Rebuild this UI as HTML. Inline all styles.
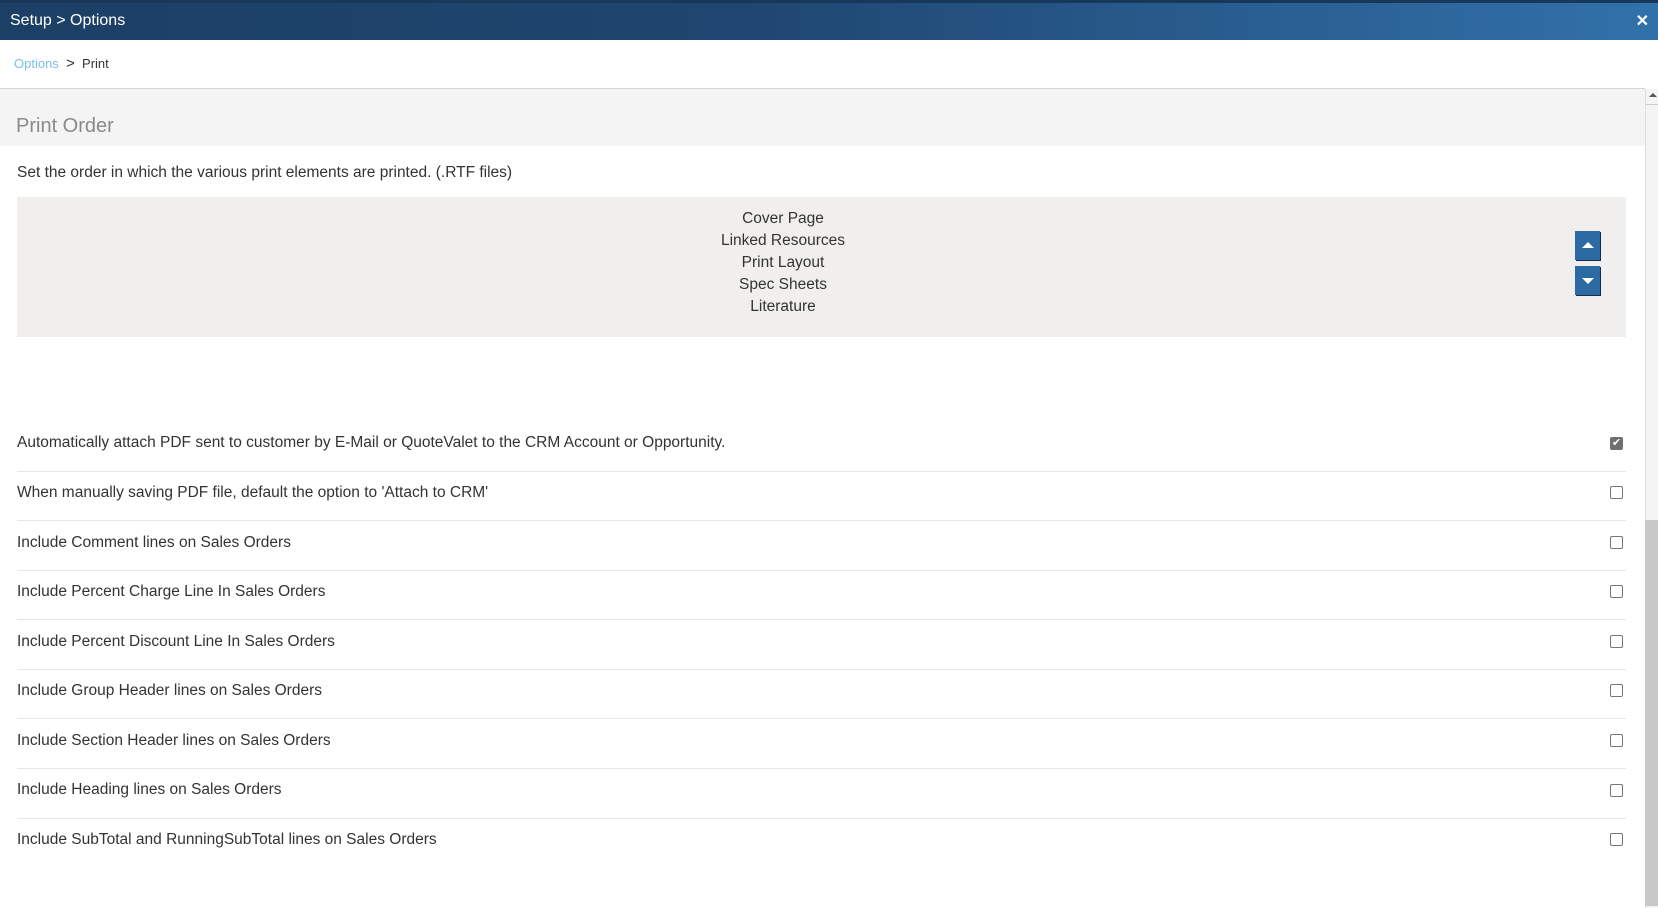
<!DOCTYPE html>
<html><head><style>
*{margin:0;padding:0;box-sizing:border-box}
body{width:1658px;height:908px;overflow:hidden;background:#fff;font-family:"Liberation Sans",Arial,sans-serif;position:relative;color:#333}
.hdr{position:absolute;left:0;top:0;width:1658px;height:40px;background:linear-gradient(90deg,#1c3f65 0%,#1f4670 45%,#3171aa 100%);border-top:3px solid #18385a}
.hdr span{position:absolute;left:10px;top:9px;color:#fff;font-size:16px}
.x{position:absolute;right:9px;top:8px;color:#fff;font-size:16px;font-weight:bold}
.bc{position:absolute;left:14px;top:55px;font-size:13px}
.bc .o{color:#7cc0e8}
.line{position:absolute;left:0;top:88px;width:1645px;height:1px;background:#d6d6d6}
.sec{position:absolute;left:0;top:89px;width:1645px;height:57px;background:#f4f4f4}
.sec span{position:absolute;left:16px;top:26px;font-size:20px;color:#8a8a8a}
.desc{position:absolute;left:17px;top:164px;font-size:15.5px}
.box{position:absolute;left:17px;top:197px;width:1609px;height:140px;background:#f0efed}
.box div{position:absolute;left:0;width:1532px;text-align:center;font-size:15.5px}
.btn{position:absolute;left:1575px;width:25px;height:29px;background:#2c6aa3;box-shadow:1px 1px 0 #162c44}
.btn i{position:absolute;left:7px;width:0;height:0;border-left:6px solid transparent;border-right:6px solid transparent}
.row{position:absolute;left:17px;width:1609px;font-size:15.5px}
.sep{position:absolute;left:17px;width:1609px;height:1px;background:#e6e6e6}
.cb{position:absolute;left:1610px;width:13px;height:13px;border:1px solid #777;border-radius:2px;background:#fff}
.sb{position:absolute;left:1645px;top:89px;width:13px;height:819px;background:#f4f4f4;border-left:1px solid #ddd}
.th{position:absolute;left:1645px;top:520px;width:13px;height:386px;background:#c8c8c8}
</style></head><body>
<div class="hdr"><span>Setup &gt; Options</span><div class="x">✕</div></div>
<div class="bc"><span class="o">Options</span>&nbsp; <span style="font-size:15px">&gt;</span>&nbsp; Print</div>
<div class="line"></div>
<div class="sec"><span>Print Order</span></div>
<div class="desc">Set the order in which the various print elements are printed. (.RTF files)</div>
<div class="box">
<div style="top:13px">Cover Page</div>
<div style="top:35px">Linked Resources</div>
<div style="top:57px">Print Layout</div>
<div style="top:79px">Spec Sheets</div>
<div style="top:101px">Literature</div>
</div>
<div class="btn" style="top:231px"><i style="top:11px;border-bottom:6px solid #fff"></i></div>
<div class="btn" style="top:266px"><i style="top:12px;border-top:6px solid #fff"></i></div>

<div class="row" style="top:434px">Automatically attach PDF sent to customer by E-Mail or QuoteValet to the CRM Account or Opportunity.</div>
<div class="cb" style="top:437px;background:#6f6f6f;border-color:#6f6f6f;color:#fff;font-size:11px;line-height:11px;text-align:center">✔</div>
<div class="sep" style="top:471px"></div>
<div class="row" style="top:484px">When manually saving PDF file, default the option to 'Attach to CRM'</div><div class="cb" style="top:486px"></div>
<div class="sep" style="top:520px"></div>
<div class="row" style="top:534px">Include Comment lines on Sales Orders</div><div class="cb" style="top:536px"></div>
<div class="sep" style="top:570px"></div>
<div class="row" style="top:583px">Include Percent Charge Line In Sales Orders</div><div class="cb" style="top:585px"></div>
<div class="sep" style="top:619px"></div>
<div class="row" style="top:633px">Include Percent Discount Line In Sales Orders</div><div class="cb" style="top:635px"></div>
<div class="sep" style="top:669px"></div>
<div class="row" style="top:682px">Include Group Header lines on Sales Orders</div><div class="cb" style="top:684px"></div>
<div class="sep" style="top:718px"></div>
<div class="row" style="top:732px">Include Section Header lines on Sales Orders</div><div class="cb" style="top:734px"></div>
<div class="sep" style="top:768px"></div>
<div class="row" style="top:781px">Include Heading lines on Sales Orders</div><div class="cb" style="top:784px"></div>
<div class="sep" style="top:818px"></div>
<div class="row" style="top:831px">Include SubTotal and RunningSubTotal lines on Sales Orders</div><div class="cb" style="top:833px"></div>

<div class="sb"><div style="position:absolute;left:3px;top:4px;border-left:4px solid transparent;border-right:4px solid transparent;border-bottom:4px solid #555"></div><div style="position:absolute;left:0;top:15px;width:12px;height:1px;background:#ccc"></div></div>
<div class="th"></div>
</body></html>
